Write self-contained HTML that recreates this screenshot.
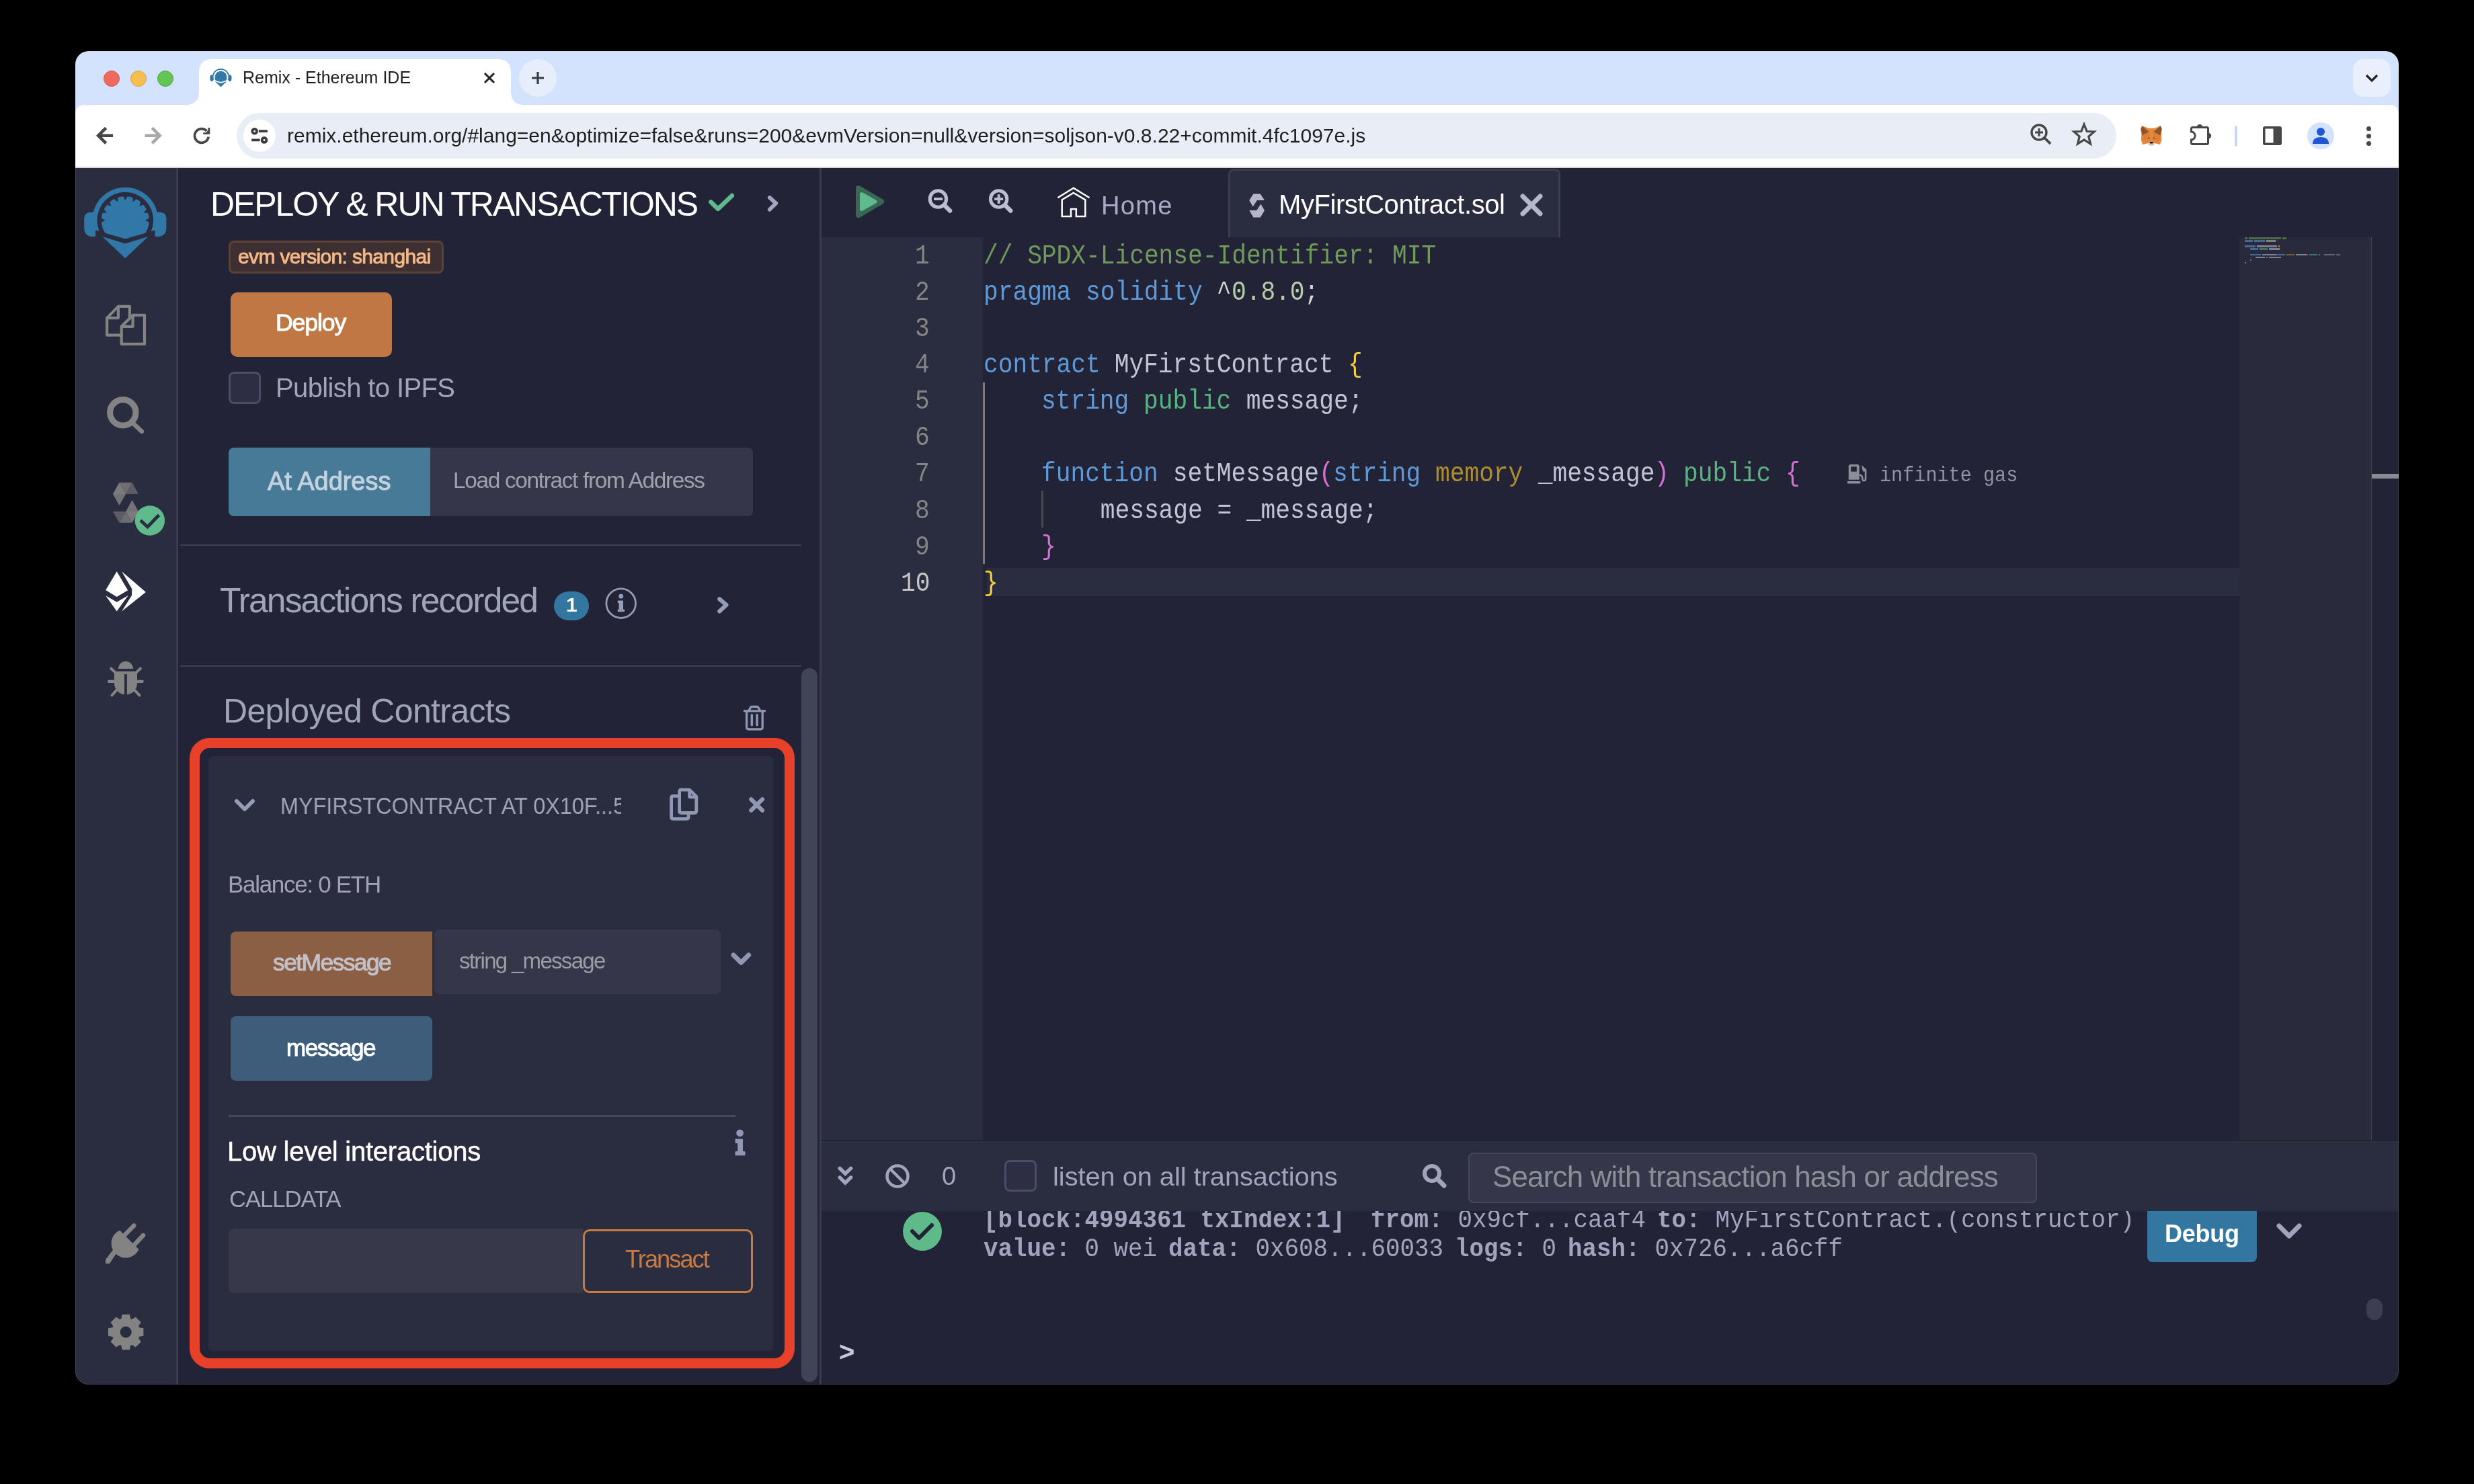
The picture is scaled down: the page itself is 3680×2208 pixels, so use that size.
<!DOCTYPE html>
<html><head><meta charset="utf-8"><title>Remix - Ethereum IDE</title>
<style>
html,body{margin:0;padding:0}
body{width:3680px;height:2208px;background:#000;position:relative;overflow:hidden;font-family:'Liberation Sans', sans-serif}
.a{position:absolute;box-sizing:content-box}
.t{white-space:nowrap;will-change:transform}
#win{position:absolute;left:112px;top:76px;width:3456px;height:1984px;border-radius:20px;overflow:hidden;background:#222336}
#pg{position:absolute;left:-112px;top:-76px;width:3680px;height:2208px}
</style></head>
<body><div id="win"><div id="pg">
<div class="a" style="left:112px;top:76px;width:3456px;height:99px;background:#d3e3fd;"></div>
<div class="a" style="left:154px;top:105px;width:22px;height:22px;border-radius:50%;background:#ee6a5f;border:1px solid #d9534a"></div>
<div class="a" style="left:194px;top:105px;width:22px;height:22px;border-radius:50%;background:#f5bf4f;border:1px solid #d6a243"></div>
<div class="a" style="left:234px;top:105px;width:22px;height:22px;border-radius:50%;background:#62c554;border:1px solid #50a73f"></div>
<svg class="a" style="left:270px;top:80px;" width="520" height="80" viewBox="0 0 520 80"><path d="M6,76 Q26,76 26,56 L26,28 Q26,8 46,8 L470,8 Q490,8 490,28 L490,56 Q490,76 510,76 Z" fill="#fff"/></svg>
<div class="a" style="left:772px;top:88px;width:56px;height:56px;border-radius:50%;background:#e6edfb"></div>
<svg class="a" style="left:786px;top:102px;" width="28" height="28" viewBox="0 0 28 28"><path d="M14,5 V23 M5,14 H23" stroke="#3c3c3c" stroke-width="3.2" stroke-linecap="butt"/></svg>
<svg class="a" style="left:716px;top:104px;" width="24" height="24" viewBox="0 0 24 24"><path d="M5,5 L19,19 M19,5 L5,19" stroke="#222" stroke-width="3"/></svg>
<div class="a" style="left:3500px;top:88px;width:56px;height:56px;border-radius:16px;background:#e9effc"></div>
<svg class="a" style="left:3514px;top:102px;" width="28" height="28" viewBox="0 0 28 28"><path d="M6,10 L14,18 L22,10" fill="none" stroke="#222" stroke-width="3.2"/></svg>
<div class="a t" style="left:361px;top:103.33px;font-size:25px;line-height:25px;color:#1f1f1f;font-weight:normal;letter-spacing:0px;font-family:'Liberation Sans', sans-serif;">Remix - Ethereum IDE</div>
<div class="a" style="left:112px;top:156px;width:3456px;height:92px;background:#ffffff;border-radius:13px 13px 0 0"></div>
<div class="a" style="left:112px;top:248px;width:3456px;height:2px;background:#d5d9de;"></div>
<svg class="a" style="left:120px;top:170px;" width="320" height="65" viewBox="0 0 320 65"><g fill="none" stroke-width="4.6" stroke-linecap="butt"><path d="M48.1,31.7 H26 M37.6,20.3 L26.2,31.7 L37.6,43.1" stroke="#474747"/><path d="M95.7,31.7 H117.8 M106.2,20.3 L117.6,31.7 L106.2,43.1" stroke="#a8a8a8"/><path d="M187.35,24.81 A10.35,10.35 0 1 0 190.15,33.44" stroke="#474747" stroke-width="3.7"/></g><path d="M192.3,20 L192.3,29.8 L182.1,29.8 L182.1,27.2 L186.5,27.2 L189.5,23.5 L189.5,20 Z" fill="#474747"/></svg>
<div class="a" style="left:352px;top:168px;width:2796px;height:68px;border-radius:34px;background:#e9eef6"></div>
<div class="a" style="left:362px;top:178px;width:48px;height:48px;border-radius:50%;background:#ffffff"></div>
<svg class="a" style="left:120px;top:170px;" width="320" height="65" viewBox="0 0 320 65"><g fill="none" stroke="#3c3c3c" stroke-width="3.8"><circle cx="258.7" cy="25.2" r="3.4"/><path d="M264.8,25.2 H277.9"/><circle cx="273" cy="38.4" r="3.4"/><path d="M254.2,38.4 H266.6"/></g></svg>
<div class="a t" style="left:427px;top:187.00px;font-size:30px;line-height:30px;color:#1f1f1f;font-weight:normal;letter-spacing:0px;font-family:'Liberation Sans', sans-serif;">remix.ethereum.org/#lang=en&amp;optimize=false&amp;runs=200&amp;evmVersion=null&amp;version=soljson-v0.8.22+commit.4fc1097e.js</div>
<svg class="a" style="left:3016px;top:180px;" width="40" height="40" viewBox="0 0 40 40"><circle cx="17" cy="17" r="11" fill="none" stroke="#474747" stroke-width="3.4"/><path d="M25,25 L34,34" stroke="#474747" stroke-width="3.8"/><path d="M17,11 V23 M11,17 H23" stroke="#474747" stroke-width="3"/></svg>
<svg class="a" style="left:3080px;top:180px;" width="40" height="40" viewBox="0 0 40 40"><path d="M20,5 L24.2,15.5 L35,16 L26.8,23 L29.5,34 L20,28 L10.5,34 L13.2,23 L5,16 L15.8,15.5 Z" fill="none" stroke="#474747" stroke-width="3.2" stroke-linejoin="miter"/></svg>
<svg class="a" style="left:3176px;top:178px;" width="48" height="46" viewBox="0 0 48 46"><path d="M10.2,9.3 L19.8,12.7 L28.8,12.7 L37.7,9.3 L39.7,13.9 L38.8,21 L39.4,30.4 L36.9,37 L28.5,35 L24.2,38.4 L19.8,35 L11.2,37 L8.7,30.4 L9.4,21 L8.2,13.9 Z" fill="#e6883a"/><path d="M10.2,9.3 L8.4,14 L10.5,23.5 L20.8,18.3 Z M37.7,9.3 L39.6,14 L37.6,23.5 L27.3,18.3 Z" fill="#8f552e"/><path d="M11,24 L20,19 L22,30 L12,32 Z M37,24 L28,19 L26,30 L36,32 Z" fill="#d97a33" opacity=".6"/><path d="M18.9,35 L29.1,35 L27,38.4 L21,38.4 Z" fill="#cdbfb0"/><path d="M21.7,33 L26.7,33 L25.8,35.4 L22.6,35.4 Z" fill="#111"/><circle cx="20.3" cy="27.5" r=".9" fill="#33406a"/><circle cx="27.9" cy="27.5" r=".9" fill="#33406a"/></svg>
<svg class="a" style="left:3176px;top:178px;" width="124" height="46" viewBox="0 0 124 46"><path d="M83.5,13.5 Q83.5,11.5 85.5,11.5 H106.5 Q108.5,11.5 108.5,13.5 V34.6 Q108.5,36.6 106.5,36.6 H85.5 Q83.5,36.6 83.5,34.6 V30 A5.6,6 0 0 0 83.5,18 Z" fill="none" stroke="#474747" stroke-width="3"/><path d="M91.6,11.5 A4.4,4.6 0 0 1 100.4,11.5 Z M108.5,19.6 A4.8,4.4 0 0 1 108.5,28.4 Z" fill="#474747"/></svg>
<div class="a" style="left:3324px;top:187px;width:4px;height:31px;background:#c7d7f7;border-radius:2px"></div>
<svg class="a" style="left:3362px;top:184px;" width="36" height="36" viewBox="0 0 36 36"><rect x="4" y="4" width="28" height="28" rx="3" fill="#474747"/><rect x="7.5" y="7.5" width="12" height="21" fill="#fff"/></svg>
<div class="a" style="left:3432px;top:182px;width:40px;height:40px;border-radius:50%;background:#d3e3fd"></div>
<svg class="a" style="left:3432px;top:182px;" width="40" height="40" viewBox="0 0 40 40"><circle cx="20" cy="14" r="6" fill="#1f56d1"/><path d="M8,32 Q8,22 20,22 Q32,22 32,32 Z" fill="#1f56d1"/></svg>
<div class="a" style="left:3520px;top:187.5px;width:7px;height:7px;border-radius:50%;background:#474747"></div>
<div class="a" style="left:3520px;top:198.5px;width:7px;height:7px;border-radius:50%;background:#474747"></div>
<div class="a" style="left:3520px;top:209.5px;width:7px;height:7px;border-radius:50%;background:#474747"></div>
<div class="a" style="left:112px;top:250px;width:150px;height:1810px;background:#2a2c3f;"></div>
<div class="a" style="left:262px;top:250px;width:3px;height:1810px;background:#3a3c52;"></div>
<div class="a" style="left:265px;top:250px;width:954px;height:1810px;background:#222336;"></div>
<div class="a" style="left:1219px;top:250px;width:3px;height:1810px;background:#3a3c52;"></div>
<div class="a" style="left:1222px;top:250px;width:2346px;height:103px;background:#222336;"></div>
<div class="a" style="left:1222px;top:353px;width:240px;height:1344px;background:#2a2c3f;"></div>
<div class="a" style="left:1462px;top:353px;width:1869px;height:1344px;background:#222336;"></div>
<div class="a" style="left:3331px;top:353px;width:196px;height:1344px;background:#292b3d;"></div>
<div class="a" style="left:3527px;top:353px;width:1px;height:1344px;background:#3f4155;"></div>
<div class="a" style="left:3528px;top:353px;width:40px;height:1344px;background:#222336;"></div>
<div class="a" style="left:3528px;top:705px;width:40px;height:7px;background:#8a8d93;"></div>
<div class="a" style="left:1222px;top:1696px;width:2346px;height:2px;background:#1f2030;"></div>
<div class="a" style="left:1222px;top:1698px;width:2346px;height:3px;background:#2b3242;"></div>
<div class="a" style="left:1222px;top:1700px;width:2346px;height:102px;background:#2a2c3f;"></div>
<div class="a" style="left:1222px;top:1802px;width:2346px;height:258px;background:#222336;"></div>
<div class="a t" style="left:312.5px;top:278.67px;font-size:50px;line-height:50px;color:#ffffff;font-weight:normal;letter-spacing:-2.08px;font-family:'Liberation Sans', sans-serif;">DEPLOY &amp; RUN TRANSACTIONS</div>
<svg class="a" style="left:1050px;top:284px;" width="46" height="36" viewBox="0 0 46 36"><path d="M7.5,16.6 L18,26.8 L38.8,7.1" fill="none" stroke="#5fba8d" stroke-width="6.6" stroke-linecap="round" stroke-linejoin="round"/></svg>
<svg class="a" style="left:1136px;top:288px;" width="26" height="30" viewBox="0 0 26 30"><path d="M8.8,6 L18.3,14.4 L8.8,23.8" fill="none" stroke="#a3a4bf" stroke-width="5.8" stroke-linecap="round" stroke-linejoin="round"/></svg>
<div class="a" style="left:340px;top:358px;width:314px;height:43px;border:3px solid #5c4236;border-radius:8px;background:#3e2f33"></div>
<div class="a t" style="left:354px;top:366.60px;font-size:30px;line-height:30px;color:#f5b987;font-weight:normal;letter-spacing:-0.65px;font-family:'Liberation Sans', sans-serif;-webkit-text-stroke:0.9px #f5b987">evm version: shanghai</div>
<div class="a" style="left:343px;top:435px;width:240px;height:96px;border-radius:10px;background:#bf7843"></div>
<div class="a t" style="left:409.5px;top:463.37px;font-size:35.7px;line-height:35.7px;color:#ffffff;font-weight:normal;letter-spacing:-1.15px;font-family:'Liberation Sans', sans-serif;-webkit-text-stroke:1px #ffffff">Deploy</div>
<div class="a" style="left:340px;top:553px;width:42px;height:42px;border:3px solid #4b4d66;border-radius:8px;background:#2d2e43"></div>
<div class="a t" style="left:410px;top:557.13px;font-size:40px;line-height:40px;color:#a2a3bd;font-weight:normal;letter-spacing:-0.62px;font-family:'Liberation Sans', sans-serif;">Publish to IPFS</div>
<div class="a" style="left:340px;top:666px;width:300px;height:102px;border-radius:8px 0 0 8px;background:#467a97"></div>
<div class="a" style="left:640px;top:666px;width:480px;height:102px;border-radius:0 8px 8px 0;background:#35364a"></div>
<div class="a t" style="left:398.3px;top:696.53px;font-size:38px;line-height:38px;color:#c4d2de;font-weight:normal;letter-spacing:-0.04px;font-family:'Liberation Sans', sans-serif;-webkit-text-stroke:1px #c4d2de">At Address</div>
<div class="a t" style="left:674.4px;top:698.12px;font-size:33.4px;line-height:33.4px;color:#9fa2ad;font-weight:normal;letter-spacing:-1.33px;font-family:'Liberation Sans', sans-serif;">Load contract from Address</div>
<div class="a" style="left:268px;top:810px;width:924px;height:2px;background:#3d3f54;"></div>
<div class="a t" style="left:327px;top:868.31px;font-size:51.6px;line-height:51.6px;color:#a0a4b8;font-weight:normal;letter-spacing:-1.87px;font-family:'Liberation Sans', sans-serif;">Transactions recorded</div>
<div class="a" style="left:824px;top:880px;width:52px;height:43px;border-radius:22px;background:#3377a0"></div>
<div class="a t" style="left:841.5px;top:884.80px;font-size:30px;line-height:30px;color:#ffffff;font-weight:bold;letter-spacing:0px;font-family:'Liberation Sans', sans-serif;">1</div>
<svg class="a" style="left:890px;top:860px;" width="70" height="70" viewBox="0 0 70 70"><circle cx="33.7" cy="37.7" r="21.8" fill="none" stroke="#959cb6" stroke-width="2.8"/><circle cx="33.7" cy="27.2" r="3.4" fill="#959cb6"/><path d="M28.8,33.4 H37 V46.8 H39 V50.2 H28.8 V46.8 H30.6 V37 H28.8 Z" fill="#959cb6"/></svg>
<svg class="a" style="left:1062px;top:886px;" width="26" height="30" viewBox="0 0 26 30"><path d="M8.3,5.3 L18.5,14 L8.3,23.5" fill="none" stroke="#959cb6" stroke-width="6.2" stroke-linecap="round" stroke-linejoin="round"/></svg>
<div class="a" style="left:268px;top:990px;width:924px;height:2px;background:#3d3f54;"></div>
<div class="a t" style="left:332px;top:1032.66px;font-size:50px;line-height:50px;color:#a0a4b8;font-weight:normal;letter-spacing:-0.65px;font-family:'Liberation Sans', sans-serif;">Deployed Contracts</div>
<svg class="a" style="left:1070px;top:1030px;" width="80" height="70" viewBox="0 0 80 70"><g fill="none" stroke="#9097b3" stroke-width="3.3" stroke-linecap="round" stroke-linejoin="round"><path d="M37.2,27.8 H67.7"/><path d="M44.3,26.4 L46.8,22 Q47.3,21.5 48.5,21.5 H56 Q57,21.5 57.6,22.3 L60.1,26.4"/><path d="M40.6,28 V52 Q40.6,55 43.6,55 H61.2 Q64.2,55 64.2,52 V28"/><path d="M48.3,33.7 V48.8 M56.1,33.7 V48.8" stroke-width="3.5"/></g></svg>
<div class="a" style="left:1192px;top:994px;width:24px;height:1062px;border-radius:12px;background:#414357"></div>
<div class="a" style="left:282px;top:1098px;width:870px;height:908px;border:15px solid #e8412a;border-radius:30px"></div>
<div class="a" style="left:310px;top:1125px;width:840px;height:885px;border-radius:6px;background:#2a2c3f"></div>
<svg class="a" style="left:346px;top:1184px;" width="36" height="28" viewBox="0 0 36 28"><path d="M6,8 L18,20 L30,8" fill="none" stroke="#959cb6" stroke-width="6" stroke-linecap="round" stroke-linejoin="round"/></svg>
<div class="a" style="left:418px;top:1170px;width:506px;height:60px;overflow:hidden">
<div class="a t" style="left:-1.5px;top:11.59px;font-size:35.8px;line-height:35.8px;color:#a0a4b8;font-weight:normal;letter-spacing:0px;font-family:'Liberation Sans', sans-serif;transform:scaleX(0.905);transform-origin:0 0">MYFIRSTCONTRACT AT 0X10F...5E4</div>
</div>
<svg class="a" style="left:980px;top:1160px;" width="170" height="70" viewBox="0 0 170 70"><g fill="none" stroke="#9097b3" stroke-width="4.8" stroke-linejoin="round"><path d="M30.6,18 Q30.6,15.1 33.5,15.1 H45.7 L55.8,25.2 V46.6 Q55.8,49.5 52.9,49.5 H33.5 Q30.6,49.5 30.6,46.6 Z"/><path d="M45.7,15.1 V25.8 H55.8"/><path d="M30.6,24.4 H21.5 Q18.6,24.4 18.6,27.3 V55.5 Q18.6,58.4 21.5,58.4 H41.1 Q44,58.4 44,55.5 V49.5"/></g></svg>
<svg class="a" style="left:980px;top:1160px;" width="170" height="70" viewBox="0 0 170 70"><path d="M137.3,29.2 L154,45.7 M154,29.2 L137.3,45.7" stroke="#9097b3" stroke-width="6.2" stroke-linecap="round"/></svg>
<div class="a t" style="left:339px;top:1298.37px;font-size:35px;line-height:35px;color:#a0a2b4;font-weight:normal;letter-spacing:-1.3px;font-family:'Liberation Sans', sans-serif;">Balance: 0 ETH</div>
<div class="a" style="left:343px;top:1386px;width:300px;height:96px;border-radius:8px 0 0 8px;background:#8b5f44"></div>
<div class="a t" style="left:406.3px;top:1414.94px;font-size:35.5px;line-height:35.5px;color:#c4c0c8;font-weight:normal;letter-spacing:-1.62px;font-family:'Liberation Sans', sans-serif;-webkit-text-stroke:1px #c4c0c8">setMessage</div>
<div class="a" style="left:646px;top:1383px;width:426px;height:96px;border-radius:8px;background:#35364a"></div>
<div class="a t" style="left:683px;top:1413.06px;font-size:33px;line-height:33px;color:#9a9ca6;font-weight:normal;letter-spacing:-1.7px;font-family:'Liberation Sans', sans-serif;">string _message</div>
<svg class="a" style="left:1084px;top:1412px;" width="36" height="30" viewBox="0 0 36 30"><path d="M7,9 L18.3,20.2 L29.6,9" fill="none" stroke="#9097b3" stroke-width="7" stroke-linecap="round" stroke-linejoin="round"/></svg>
<div class="a" style="left:343px;top:1512px;width:300px;height:96px;border-radius:8px;background:#3d5d7a"></div>
<div class="a t" style="left:425.5px;top:1541.37px;font-size:35px;line-height:35px;color:#ffffff;font-weight:normal;letter-spacing:-1.42px;font-family:'Liberation Sans', sans-serif;-webkit-text-stroke:1px #ffffff">message</div>
<div class="a" style="left:340px;top:1659px;width:754px;height:3px;background:#45475a;"></div>
<div class="a t" style="left:338px;top:1693.13px;font-size:40px;line-height:40px;color:#ffffff;font-weight:normal;letter-spacing:-0.25px;font-family:'Liberation Sans', sans-serif;-webkit-text-stroke:0.5px #ffffff">Low level interactions</div>
<svg class="a" style="left:1090px;top:1678px;" width="22" height="44" viewBox="0 0 22 44"><circle cx="10.6" cy="7.8" r="5.4" fill="#9097b3"/><path d="M4,17 H14.5 V35.5 H18 V40.8 H4 V35.5 H7.8 V22.5 H4 Z" fill="#9097b3" stroke="#9097b3" stroke-width="1" stroke-linejoin="round"/></svg>
<div class="a t" style="left:341px;top:1767.20px;font-size:34.6px;line-height:34.6px;color:#9fa3b4;font-weight:normal;letter-spacing:-1.0px;font-family:'Liberation Sans', sans-serif;">CALLDATA</div>
<div class="a" style="left:340px;top:1828px;width:527px;height:96px;border-radius:8px 0 0 8px;background:#373849"></div>
<div class="a" style="left:867px;top:1829px;width:247px;height:89px;border:3px solid #c97a3f;border-radius:10px"></div>
<div class="a t" style="left:930px;top:1856.06px;font-size:36.3px;line-height:36.3px;color:#c97a3f;font-weight:normal;letter-spacing:-2.0px;font-family:'Liberation Sans', sans-serif;">Transact</div>
<svg class="a" style="left:112px;top:260px;" width="150" height="150" viewBox="0 0 150 150"><defs><clipPath id="hb2a2c3f"><rect x="0" y="0" width="150" height="58"/></clipPath></defs><g fill="#3178a8"><circle cx="74.3" cy="67.7" r="49" clip-path="url(#hb2a2c3f)"/><path d="M26.8,55.6 Q14,55 13.2,64 V80 Q14,92 26,92 L40,92 L40,55.6 Z"/><path d="M121.8,55.6 Q134.6,55 135.4,64 V80 Q134.6,92 122.6,92 L108.6,92 L108.6,55.6 Z"/></g><circle cx="74.3" cy="67.7" r="41.9" fill="#2a2c3f"/><circle cx="74.3" cy="67.7" r="35.6" fill="#3178a8"/><path d="M36.3,63.5 L36.3,71.9 L44.8,67.7 Z" fill="#2a2c3f"/><path d="M40.8,49.3 L37.6,57.0 L47.0,56.4 Z" fill="#2a2c3f"/><path d="M50.4,37.9 L44.5,43.8 L53.4,46.8 Z" fill="#2a2c3f"/><path d="M63.6,31.0 L55.9,34.2 L63.0,40.4 Z" fill="#2a2c3f"/><path d="M78.5,29.7 L70.1,29.7 L74.3,38.2 Z" fill="#2a2c3f"/><path d="M92.7,34.2 L85.0,31.0 L85.6,40.4 Z" fill="#2a2c3f"/><path d="M104.1,43.8 L98.2,37.9 L95.2,46.8 Z" fill="#2a2c3f"/><path d="M111.0,57.0 L107.8,49.3 L101.6,56.4 Z" fill="#2a2c3f"/><path d="M112.3,71.9 L112.3,63.5 L103.8,67.7 Z" fill="#2a2c3f"/><path d="M30,82.6 L74.3,95.5 L118.6,82.6 L118.6,120 L30,120 Z" fill="#2a2c3f"/><path d="M40.2,92 L74.3,102.6 L108.4,92 L74.3,124.3 Z" fill="#3178a8"/></svg>
<svg class="a" style="left:308.5px;top:97px" width="40" height="40" viewBox="0 0 152.7 152.7"><defs><clipPath id="hbffffff"><rect x="0" y="0" width="150" height="58"/></clipPath></defs><g fill="#3178a8"><circle cx="74.3" cy="67.7" r="49" clip-path="url(#hbffffff)"/><path d="M26.8,55.6 Q14,55 13.2,64 V80 Q14,92 26,92 L40,92 L40,55.6 Z"/><path d="M121.8,55.6 Q134.6,55 135.4,64 V80 Q134.6,92 122.6,92 L108.6,92 L108.6,55.6 Z"/></g><circle cx="74.3" cy="67.7" r="41.9" fill="#ffffff"/><circle cx="74.3" cy="67.7" r="35.6" fill="#3178a8"/><path d="M36.3,63.5 L36.3,71.9 L44.8,67.7 Z" fill="#ffffff"/><path d="M40.8,49.3 L37.6,57.0 L47.0,56.4 Z" fill="#ffffff"/><path d="M50.4,37.9 L44.5,43.8 L53.4,46.8 Z" fill="#ffffff"/><path d="M63.6,31.0 L55.9,34.2 L63.0,40.4 Z" fill="#ffffff"/><path d="M78.5,29.7 L70.1,29.7 L74.3,38.2 Z" fill="#ffffff"/><path d="M92.7,34.2 L85.0,31.0 L85.6,40.4 Z" fill="#ffffff"/><path d="M104.1,43.8 L98.2,37.9 L95.2,46.8 Z" fill="#ffffff"/><path d="M111.0,57.0 L107.8,49.3 L101.6,56.4 Z" fill="#ffffff"/><path d="M112.3,71.9 L112.3,63.5 L103.8,67.7 Z" fill="#ffffff"/><path d="M30,82.6 L74.3,95.5 L118.6,82.6 L118.6,120 L30,120 Z" fill="#ffffff"/><path d="M40.2,92 L74.3,102.6 L108.4,92 L74.3,124.3 Z" fill="#3178a8"/></svg>
<svg class="a" style="left:137px;top:430px;" width="100" height="100" viewBox="0 0 100 100"><g fill="none" stroke="#838383" stroke-width="4.2" stroke-linejoin="round" stroke-linecap="round"><path d="M55.9,41 V25.9 H38.9 L22.1,43.1 V68.7 H43.7"/><path d="M38.9,25.9 V43.1 H22.1"/><path d="M60.6,38.9 H78 V81.9 H43.7 V55.8 Z"/><path d="M60.6,38.9 V55.8 H43.7"/></g></svg>
<svg class="a" style="left:137px;top:570px;" width="100" height="100" viewBox="0 0 100 100"><circle cx="45.8" cy="43.8" r="19.2" fill="none" stroke="#838383" stroke-width="9.1"/><path d="M60,59 L73.8,71.8" stroke="#838383" stroke-width="6.6" stroke-linecap="round"/></svg>
<svg class="a" style="left:137px;top:700px;" width="120" height="100" viewBox="0 0 120 100"><path d="M40.4,18.1 L30.9,34.9 L50.2,34.9 Z" fill="#7b7b7d"/><path d="M40.4,18.1 L59.6,18.1 L50.2,34.9 Z" fill="#6f6f73"/><path d="M59.6,18.1 L68.9,34.9 L50.2,34.9 Z" fill="#5d5d67"/><path d="M30.9,34.9 L50.2,34.9 L40.4,51.9 Z" fill="#727276"/><path d="M59.6,44.1 L50.2,61 L69,61 Z" fill="#747478"/><path d="M50.2,61 L69,61 L59.6,77.8 Z" fill="#7b7b7d"/><path d="M50.2,61 L59.6,77.8 L40.4,77.8 Z" fill="#6c6c71"/><path d="M30.9,61 L50.2,61 L40.4,77.8 Z" fill="#5d5d67"/><circle cx="85.9" cy="74.5" r="22.2" fill="#5fba8c"/><path d="M73.8,75.8 L82.5,83.9 L97.8,68" fill="none" stroke="#2a2c3f" stroke-width="4.8" stroke-linecap="square"/></svg>
<svg class="a" style="left:137px;top:830px;" width="100" height="100" viewBox="0 0 100 100"><g fill="#ffffff"><path d="M36.7,20.2 L53.2,48.2 L36.7,58 L20.2,48 Z"/><path d="M20.2,56.3 L36.7,65.7 L53.6,55.9 L36.7,79.5 Z"/><path d="M44.1,20.2 L79.9,50.9 L44.1,79.5 L59,55.9 L59.3,46.2 Z"/></g></svg>
<svg class="a" style="left:137px;top:960px;" width="100" height="100" viewBox="0 0 100 100"><g fill="#838383"><path d="M39,34.9 A11,11 0 0 1 61,34.9 Z"/><path d="M33,39 H67 V57 A17,16.5 0 0 1 50,73.5 A17,16.5 0 0 1 33,57 Z"/></g><rect x="48" y="43.1" width="3.9" height="32" fill="#2a2c3f"/><g stroke="#838383" stroke-width="4.1" stroke-linecap="round"><path d="M28.3,34.7 L34.4,40.4 M71.8,34.7 L65.7,40.4 M24.9,53.9 H33 M74.8,53.9 H67 M29.6,74.5 L35.7,67.4 M70.4,74.5 L64,67.7"/></g></svg>
<svg class="a" style="left:137px;top:1800px;" width="100" height="100" viewBox="0 0 100 100"><g fill="#838383"><path d="M40.97,30.47 L69.53,59.03 A21.5,21.5 0 1 1 40.97,30.47 Z"/><path d="M33,57 L38,62 L26,80 L20,80 L20,74 Z"/></g><g stroke="#838383" stroke-width="6.6" stroke-linecap="round"><path d="M47,39 L62.3,23.5 M62,53 L76,38"/></g></svg>
<svg class="a" style="left:137px;top:1955px;" width="100" height="60" viewBox="0 0 100 60"><g fill="#838383"><circle cx="50.2" cy="27" r="21"/><path d="M44.5,0.8 H55.9 L57.5,9 H42.9 Z" transform="rotate(0 50.2 27)"/><path d="M44.5,0.8 H55.9 L57.5,9 H42.9 Z" transform="rotate(45 50.2 27)"/><path d="M44.5,0.8 H55.9 L57.5,9 H42.9 Z" transform="rotate(90 50.2 27)"/><path d="M44.5,0.8 H55.9 L57.5,9 H42.9 Z" transform="rotate(135 50.2 27)"/><path d="M44.5,0.8 H55.9 L57.5,9 H42.9 Z" transform="rotate(180 50.2 27)"/><path d="M44.5,0.8 H55.9 L57.5,9 H42.9 Z" transform="rotate(225 50.2 27)"/><path d="M44.5,0.8 H55.9 L57.5,9 H42.9 Z" transform="rotate(270 50.2 27)"/><path d="M44.5,0.8 H55.9 L57.5,9 H42.9 Z" transform="rotate(315 50.2 27)"/></g><circle cx="50.2" cy="27" r="8.5" fill="#2a2c3f"/></svg>
<svg class="a" style="left:1250px;top:260px;" width="280" height="80" viewBox="0 0 280 80"><path d="M27,20 L61,40 L27,60 Z" fill="#3a6656" stroke="#3a6656" stroke-width="8" stroke-linejoin="round"/><path d="M31.5,28.5 L52,40 L31.5,51.5 Z" fill="#5fbb8d" stroke="#5fbb8d" stroke-width="5" stroke-linejoin="round"/><g fill="none" stroke="#bcbdd0"><circle cx="145.4" cy="36" r="12.2" stroke-width="5.1"/><path d="M156.5,47 L163,53.5" stroke-width="6.6" stroke-linecap="round"/><path d="M139,36 H152.2" stroke-width="4"/><circle cx="235.6" cy="36" r="12.2" stroke-width="5.1"/><path d="M246.7,47 L253.2,53.5" stroke-width="6.6" stroke-linecap="round"/><path d="M229.2,36 H242.2 M235.7,29.2 V43" stroke-width="4"/></g></svg>
<svg class="a" style="left:1560px;top:265px;" width="340" height="75" viewBox="0 0 340 75"><g fill="none" stroke="#ffffff" stroke-width="2.5"><path d="M13.3,29.3 L36.8,14.8 L60.5,29.3"/><path d="M19.7,32.3 L36.8,22 L54.3,32.3 V57 H40.8 V46 H33 V57 H19.7 Z"/></g></svg>
<div class="a t" style="left:1638px;top:286.83px;font-size:38px;line-height:38px;color:#a9aac4;font-weight:normal;letter-spacing:1.33px;font-family:'Liberation Sans', sans-serif;">Home</div>
<div class="a" style="left:1827px;top:251px;width:488px;height:99px;border:3px solid #3a3c50;border-bottom:none;border-radius:8px 8px 0 0;background:#2a2c3f"></div>
<svg class="a" style="left:1560px;top:265px;" width="340" height="75" viewBox="0 0 340 75"><g fill="#b5b6cc"><path d="M298.2,33 L304.4,23.4 L314.7,23.4 L321,33 L309.9,33 L303.7,42.6 Z"/><path d="M321,48.1 L314.7,58.4 L304.4,58.4 L298.2,48.1 L309.3,48.1 L315.3,38.6 Z"/></g></svg>
<div class="a t" style="left:1902px;top:284.13px;font-size:40px;line-height:40px;color:#ffffff;font-weight:normal;letter-spacing:-0.42px;font-family:'Liberation Sans', sans-serif;">MyFirstContract.sol</div>
<svg class="a" style="left:2258px;top:285px;" width="40" height="40" viewBox="0 0 40 40"><path d="M7,7 L33,33 M33,7 L7,33" stroke="#b5b6cc" stroke-width="7" stroke-linecap="round"/></svg>
<div class="a" style="left:1468px;top:845px;width:1863px;height:42px;background:#2a2c3f;"></div>
<div class="a" style="left:1462px;top:569px;width:3px;height:270px;background:#7a7a7a;"></div>
<div class="a" style="left:1549px;top:730px;width:3px;height:55px;background:#4a4a48;"></div>
<div class="a t" style="left:1361.3px;top:364.87px;font-size:36.2px;line-height:36.2px;color:#858585;font-weight:normal;letter-spacing:0px;font-family:'Liberation Mono', monospace;;transform:scaleY(1.1);transform-origin:0 27.73px">1</div>
<div class="a t" style="left:1462.6px;top:364.87px;font-size:36.2px;line-height:36.2px;color:#6f9a5a;font-weight:normal;letter-spacing:0px;font-family:'Liberation Mono', monospace;white-space:pre;transform:scaleY(1.1);transform-origin:0 27.73px">// SPDX-License-Identifier: MIT</div>
<div class="a t" style="left:1361.3px;top:418.97px;font-size:36.2px;line-height:36.2px;color:#858585;font-weight:normal;letter-spacing:0px;font-family:'Liberation Mono', monospace;;transform:scaleY(1.1);transform-origin:0 27.73px">2</div>
<div class="a t" style="left:1462.6px;top:418.97px;font-size:36.2px;line-height:36.2px;color:#5f9ad8;font-weight:normal;letter-spacing:0px;font-family:'Liberation Mono', monospace;white-space:pre;transform:scaleY(1.1);transform-origin:0 27.73px">pragma</div>
<div class="a t" style="left:1592.8px;top:418.97px;font-size:36.2px;line-height:36.2px;color:#fff;font-weight:normal;letter-spacing:0px;font-family:'Liberation Mono', monospace;white-space:pre;transform:scaleY(1.1);transform-origin:0 27.73px"> </div>
<div class="a t" style="left:1614.5px;top:418.97px;font-size:36.2px;line-height:36.2px;color:#5f9ad8;font-weight:normal;letter-spacing:0px;font-family:'Liberation Mono', monospace;white-space:pre;transform:scaleY(1.1);transform-origin:0 27.73px">solidity</div>
<div class="a t" style="left:1788.1px;top:418.97px;font-size:36.2px;line-height:36.2px;color:#d4d4d4;font-weight:normal;letter-spacing:0px;font-family:'Liberation Mono', monospace;white-space:pre;transform:scaleY(1.1);transform-origin:0 27.73px"> ^</div>
<div class="a t" style="left:1831.5px;top:418.97px;font-size:36.2px;line-height:36.2px;color:#b5cea8;font-weight:normal;letter-spacing:0px;font-family:'Liberation Mono', monospace;white-space:pre;transform:scaleY(1.1);transform-origin:0 27.73px">0.8.0</div>
<div class="a t" style="left:1940.0px;top:418.97px;font-size:36.2px;line-height:36.2px;color:#d4d4d4;font-weight:normal;letter-spacing:0px;font-family:'Liberation Mono', monospace;white-space:pre;transform:scaleY(1.1);transform-origin:0 27.73px">;</div>
<div class="a t" style="left:1361.3px;top:473.07px;font-size:36.2px;line-height:36.2px;color:#858585;font-weight:normal;letter-spacing:0px;font-family:'Liberation Mono', monospace;;transform:scaleY(1.1);transform-origin:0 27.73px">3</div>
<div class="a t" style="left:1361.3px;top:527.17px;font-size:36.2px;line-height:36.2px;color:#858585;font-weight:normal;letter-spacing:0px;font-family:'Liberation Mono', monospace;;transform:scaleY(1.1);transform-origin:0 27.73px">4</div>
<div class="a t" style="left:1462.6px;top:527.17px;font-size:36.2px;line-height:36.2px;color:#5f9ad8;font-weight:normal;letter-spacing:0px;font-family:'Liberation Mono', monospace;white-space:pre;transform:scaleY(1.1);transform-origin:0 27.73px">contract</div>
<div class="a t" style="left:1636.1999999999998px;top:527.17px;font-size:36.2px;line-height:36.2px;color:#c2c3d3;font-weight:normal;letter-spacing:0px;font-family:'Liberation Mono', monospace;white-space:pre;transform:scaleY(1.1);transform-origin:0 27.73px"> MyFirstContract </div>
<div class="a t" style="left:2005.1px;top:527.17px;font-size:36.2px;line-height:36.2px;color:#f2cf3b;font-weight:normal;letter-spacing:0px;font-family:'Liberation Mono', monospace;white-space:pre;transform:scaleY(1.1);transform-origin:0 27.73px">{</div>
<div class="a t" style="left:1361.3px;top:581.27px;font-size:36.2px;line-height:36.2px;color:#858585;font-weight:normal;letter-spacing:0px;font-family:'Liberation Mono', monospace;;transform:scaleY(1.1);transform-origin:0 27.73px">5</div>
<div class="a t" style="left:1462.6px;top:581.27px;font-size:36.2px;line-height:36.2px;color:#fff;font-weight:normal;letter-spacing:0px;font-family:'Liberation Mono', monospace;white-space:pre;transform:scaleY(1.1);transform-origin:0 27.73px">    </div>
<div class="a t" style="left:1549.3999999999999px;top:581.27px;font-size:36.2px;line-height:36.2px;color:#5f9ad8;font-weight:normal;letter-spacing:0px;font-family:'Liberation Mono', monospace;white-space:pre;transform:scaleY(1.1);transform-origin:0 27.73px">string</div>
<div class="a t" style="left:1679.6px;top:581.27px;font-size:36.2px;line-height:36.2px;color:#fff;font-weight:normal;letter-spacing:0px;font-family:'Liberation Mono', monospace;white-space:pre;transform:scaleY(1.1);transform-origin:0 27.73px"> </div>
<div class="a t" style="left:1701.3px;top:581.27px;font-size:36.2px;line-height:36.2px;color:#57b37f;font-weight:normal;letter-spacing:0px;font-family:'Liberation Mono', monospace;white-space:pre;transform:scaleY(1.1);transform-origin:0 27.73px">public</div>
<div class="a t" style="left:1831.5px;top:581.27px;font-size:36.2px;line-height:36.2px;color:#c2c3d3;font-weight:normal;letter-spacing:0px;font-family:'Liberation Mono', monospace;white-space:pre;transform:scaleY(1.1);transform-origin:0 27.73px"> message;</div>
<div class="a t" style="left:1361.3px;top:635.37px;font-size:36.2px;line-height:36.2px;color:#858585;font-weight:normal;letter-spacing:0px;font-family:'Liberation Mono', monospace;;transform:scaleY(1.1);transform-origin:0 27.73px">6</div>
<div class="a t" style="left:1361.3px;top:689.47px;font-size:36.2px;line-height:36.2px;color:#858585;font-weight:normal;letter-spacing:0px;font-family:'Liberation Mono', monospace;;transform:scaleY(1.1);transform-origin:0 27.73px">7</div>
<div class="a t" style="left:1462.6px;top:689.47px;font-size:36.2px;line-height:36.2px;color:#fff;font-weight:normal;letter-spacing:0px;font-family:'Liberation Mono', monospace;white-space:pre;transform:scaleY(1.1);transform-origin:0 27.73px">    </div>
<div class="a t" style="left:1549.3999999999999px;top:689.47px;font-size:36.2px;line-height:36.2px;color:#5f9ad8;font-weight:normal;letter-spacing:0px;font-family:'Liberation Mono', monospace;white-space:pre;transform:scaleY(1.1);transform-origin:0 27.73px">function</div>
<div class="a t" style="left:1722.9999999999998px;top:689.47px;font-size:36.2px;line-height:36.2px;color:#c2c3d3;font-weight:normal;letter-spacing:0px;font-family:'Liberation Mono', monospace;white-space:pre;transform:scaleY(1.1);transform-origin:0 27.73px"> setMessage</div>
<div class="a t" style="left:1961.6999999999998px;top:689.47px;font-size:36.2px;line-height:36.2px;color:#d670d6;font-weight:normal;letter-spacing:0px;font-family:'Liberation Mono', monospace;white-space:pre;transform:scaleY(1.1);transform-origin:0 27.73px">(</div>
<div class="a t" style="left:1983.3999999999999px;top:689.47px;font-size:36.2px;line-height:36.2px;color:#5f9ad8;font-weight:normal;letter-spacing:0px;font-family:'Liberation Mono', monospace;white-space:pre;transform:scaleY(1.1);transform-origin:0 27.73px">string</div>
<div class="a t" style="left:2113.6px;top:689.47px;font-size:36.2px;line-height:36.2px;color:#fff;font-weight:normal;letter-spacing:0px;font-family:'Liberation Mono', monospace;white-space:pre;transform:scaleY(1.1);transform-origin:0 27.73px"> </div>
<div class="a t" style="left:2135.2999999999997px;top:689.47px;font-size:36.2px;line-height:36.2px;color:#ad8d2f;font-weight:normal;letter-spacing:0px;font-family:'Liberation Mono', monospace;white-space:pre;transform:scaleY(1.1);transform-origin:0 27.73px">memory</div>
<div class="a t" style="left:2265.4999999999995px;top:689.47px;font-size:36.2px;line-height:36.2px;color:#c2c3d3;font-weight:normal;letter-spacing:0px;font-family:'Liberation Mono', monospace;white-space:pre;transform:scaleY(1.1);transform-origin:0 27.73px"> _message</div>
<div class="a t" style="left:2460.7999999999997px;top:689.47px;font-size:36.2px;line-height:36.2px;color:#d670d6;font-weight:normal;letter-spacing:0px;font-family:'Liberation Mono', monospace;white-space:pre;transform:scaleY(1.1);transform-origin:0 27.73px">)</div>
<div class="a t" style="left:2482.4999999999995px;top:689.47px;font-size:36.2px;line-height:36.2px;color:#fff;font-weight:normal;letter-spacing:0px;font-family:'Liberation Mono', monospace;white-space:pre;transform:scaleY(1.1);transform-origin:0 27.73px"> </div>
<div class="a t" style="left:2504.1999999999994px;top:689.47px;font-size:36.2px;line-height:36.2px;color:#57b37f;font-weight:normal;letter-spacing:0px;font-family:'Liberation Mono', monospace;white-space:pre;transform:scaleY(1.1);transform-origin:0 27.73px">public</div>
<div class="a t" style="left:2634.399999999999px;top:689.47px;font-size:36.2px;line-height:36.2px;color:#fff;font-weight:normal;letter-spacing:0px;font-family:'Liberation Mono', monospace;white-space:pre;transform:scaleY(1.1);transform-origin:0 27.73px"> </div>
<div class="a t" style="left:2656.099999999999px;top:689.47px;font-size:36.2px;line-height:36.2px;color:#d670d6;font-weight:normal;letter-spacing:0px;font-family:'Liberation Mono', monospace;white-space:pre;transform:scaleY(1.1);transform-origin:0 27.73px">{</div>
<div class="a t" style="left:1361.3px;top:743.57px;font-size:36.2px;line-height:36.2px;color:#858585;font-weight:normal;letter-spacing:0px;font-family:'Liberation Mono', monospace;;transform:scaleY(1.1);transform-origin:0 27.73px">8</div>
<div class="a t" style="left:1462.6px;top:743.57px;font-size:36.2px;line-height:36.2px;color:#c2c3d3;font-weight:normal;letter-spacing:0px;font-family:'Liberation Mono', monospace;white-space:pre;transform:scaleY(1.1);transform-origin:0 27.73px">        message = _message;</div>
<div class="a t" style="left:1361.3px;top:797.67px;font-size:36.2px;line-height:36.2px;color:#858585;font-weight:normal;letter-spacing:0px;font-family:'Liberation Mono', monospace;;transform:scaleY(1.1);transform-origin:0 27.73px">9</div>
<div class="a t" style="left:1462.6px;top:797.67px;font-size:36.2px;line-height:36.2px;color:#fff;font-weight:normal;letter-spacing:0px;font-family:'Liberation Mono', monospace;white-space:pre;transform:scaleY(1.1);transform-origin:0 27.73px">    </div>
<div class="a t" style="left:1549.3999999999999px;top:797.67px;font-size:36.2px;line-height:36.2px;color:#d670d6;font-weight:normal;letter-spacing:0px;font-family:'Liberation Mono', monospace;white-space:pre;transform:scaleY(1.1);transform-origin:0 27.73px">}</div>
<div class="a t" style="left:1339.6px;top:851.77px;font-size:36.2px;line-height:36.2px;color:#c6c6c6;font-weight:normal;letter-spacing:0px;font-family:'Liberation Mono', monospace;;transform:scaleY(1.1);transform-origin:0 27.73px">10</div>
<div class="a t" style="left:1462.6px;top:851.77px;font-size:36.2px;line-height:36.2px;color:#f2cf3b;font-weight:normal;letter-spacing:0px;font-family:'Liberation Mono', monospace;white-space:pre;transform:scaleY(1.1);transform-origin:0 27.73px">}</div>
<svg class="a" style="left:2730px;top:680px;" width="70" height="50" viewBox="0 0 70 50"><g fill="#8a9099"><path d="M19.7,33.8 V14.1 Q19.7,11.1 22.7,11.1 H32.7 Q35.7,11.1 35.7,14.1 V33.8 Z"/><rect x="17.8" y="36" width="19.6" height="3.6" rx="1"/><path d="M39.3,12 L45.8,18.2 V20.5 L42.3,22.5 L40.2,19 Z"/></g><rect x="23.2" y="14.3" width="8.6" height="7.4" fill="#222336"/><path d="M35.7,26.6 Q40.2,26.6 40.2,31.8 Q40.2,35.2 42.8,35.2 Q45.1,35.2 45.1,31.8 V19" fill="none" stroke="#8a9099" stroke-width="2.6"/></svg>
<div class="a t" style="left:2796px;top:695.17px;font-size:28.5px;line-height:28.5px;color:#8f92a0;font-weight:normal;letter-spacing:0px;font-family:'Liberation Mono', monospace;;transform:scaleY(1.1);transform-origin:0 21.83px">infinite gas</div>
<div class="a" style="left:3339.0px;top:353.0px;width:4px;height:2.6px;background:#6f9a5a;opacity:.55"></div>
<div class="a" style="left:3345.0px;top:353.0px;width:48px;height:2.6px;background:#6f9a5a;opacity:.55"></div>
<div class="a" style="left:3395.0px;top:353.0px;width:6px;height:2.6px;background:#6f9a5a;opacity:.55"></div>
<div class="a" style="left:3339.0px;top:357.1px;width:12px;height:2.6px;background:#5f9ad8;opacity:.55"></div>
<div class="a" style="left:3353.0px;top:357.1px;width:16px;height:2.6px;background:#5f9ad8;opacity:.55"></div>
<div class="a" style="left:3371.0px;top:357.1px;width:2px;height:2.6px;background:#d4d4d4;opacity:.55"></div>
<div class="a" style="left:3373.0px;top:357.1px;width:10px;height:2.6px;background:#b5cea8;opacity:.55"></div>
<div class="a" style="left:3383.0px;top:357.1px;width:2px;height:2.6px;background:#d4d4d4;opacity:.55"></div>
<div class="a" style="left:3339.0px;top:365.3px;width:16px;height:2.6px;background:#5f9ad8;opacity:.55"></div>
<div class="a" style="left:3357.0px;top:365.3px;width:30px;height:2.6px;background:#c2c3d3;opacity:.55"></div>
<div class="a" style="left:3389.0px;top:365.3px;width:2px;height:2.6px;background:#f2cf3b;opacity:.55"></div>
<div class="a" style="left:3347.0px;top:369.4px;width:12px;height:2.6px;background:#5f9ad8;opacity:.55"></div>
<div class="a" style="left:3361.0px;top:369.4px;width:12px;height:2.6px;background:#57b37f;opacity:.55"></div>
<div class="a" style="left:3375.0px;top:369.4px;width:16px;height:2.6px;background:#c2c3d3;opacity:.55"></div>
<div class="a" style="left:3347.0px;top:377.6px;width:16px;height:2.6px;background:#5f9ad8;opacity:.55"></div>
<div class="a" style="left:3365.0px;top:377.6px;width:20px;height:2.6px;background:#c2c3d3;opacity:.55"></div>
<div class="a" style="left:3385.0px;top:377.6px;width:2px;height:2.6px;background:#d670d6;opacity:.55"></div>
<div class="a" style="left:3387.0px;top:377.6px;width:12px;height:2.6px;background:#5f9ad8;opacity:.55"></div>
<div class="a" style="left:3401.0px;top:377.6px;width:12px;height:2.6px;background:#ad8d2f;opacity:.55"></div>
<div class="a" style="left:3415.0px;top:377.6px;width:16px;height:2.6px;background:#c2c3d3;opacity:.55"></div>
<div class="a" style="left:3431.0px;top:377.6px;width:2px;height:2.6px;background:#d670d6;opacity:.55"></div>
<div class="a" style="left:3435.0px;top:377.6px;width:12px;height:2.6px;background:#57b37f;opacity:.55"></div>
<div class="a" style="left:3449.0px;top:377.6px;width:2px;height:2.6px;background:#d670d6;opacity:.55"></div>
<div class="a" style="left:3457.0px;top:377.6px;width:16px;height:2.6px;background:#8f92a0;opacity:.55"></div>
<div class="a" style="left:3475.0px;top:377.6px;width:6px;height:2.6px;background:#8f92a0;opacity:.55"></div>
<div class="a" style="left:3355.0px;top:381.7px;width:14px;height:2.6px;background:#c2c3d3;opacity:.55"></div>
<div class="a" style="left:3371.0px;top:381.7px;width:2px;height:2.6px;background:#c2c3d3;opacity:.55"></div>
<div class="a" style="left:3375.0px;top:381.7px;width:18px;height:2.6px;background:#c2c3d3;opacity:.55"></div>
<div class="a" style="left:3347.0px;top:385.8px;width:2px;height:2.6px;background:#d670d6;opacity:.55"></div>
<div class="a" style="left:3339.0px;top:389.9px;width:2px;height:2.6px;background:#f2cf3b;opacity:.55"></div>
<svg class="a" style="left:1240px;top:1730px;" width="34" height="38" viewBox="0 0 34 38"><path d="M9.1,8.3 L17.3,16.3 L25.7,8.3 M9.1,21.8 L17.3,29.9 L25.7,21.8" fill="none" stroke="#a2a3bd" stroke-width="5.4" stroke-linecap="round" stroke-linejoin="miter"/></svg>
<svg class="a" style="left:1314px;top:1729px;" width="42" height="42" viewBox="0 0 42 42"><circle cx="21" cy="21" r="15.5" fill="none" stroke="#a2a3bd" stroke-width="4.5"/><path d="M10,10 L32,32" stroke="#a2a3bd" stroke-width="4.5"/></svg>
<div class="a t" style="left:1401px;top:1730.83px;font-size:38px;line-height:38px;color:#a2a3bd;font-weight:normal;letter-spacing:0px;font-family:'Liberation Sans', sans-serif;">0</div>
<div class="a" style="left:1494px;top:1726px;width:42px;height:41px;border:3px solid #4b4d66;border-radius:8px;background:#2d2e43"></div>
<div class="a t" style="left:1566px;top:1730.69px;font-size:39.7px;line-height:39.7px;color:#a2a3bd;font-weight:normal;letter-spacing:0px;font-family:'Liberation Sans', sans-serif;">listen on all transactions</div>
<svg class="a" style="left:2112px;top:1728px;" width="44" height="44" viewBox="0 0 44 44"><circle cx="18" cy="18" r="11" fill="none" stroke="#a2a3bd" stroke-width="6"/><path d="M26,26 L36,36" stroke="#a2a3bd" stroke-width="7" stroke-linecap="round"/></svg>
<div class="a" style="left:2184px;top:1715px;width:842px;height:71px;border:2px solid #45475c;border-radius:8px;background:#35364a"></div>
<div class="a t" style="left:2220px;top:1728.63px;font-size:43.9px;line-height:43.9px;color:#898f96;font-weight:normal;letter-spacing:-0.8px;font-family:'Liberation Sans', sans-serif;">Search with transaction hash or address</div>
<div class="a" style="left:1343px;top:1803px;width:58px;height:58px;border-radius:50%;background:#5fba8a"></div>
<svg class="a" style="left:1343px;top:1803px;" width="58" height="58" viewBox="0 0 58 58"><path d="M14,29 L24,39 L43,20" fill="none" stroke="#222336" stroke-width="6" stroke-linecap="round" stroke-linejoin="round"/></svg>
<div class="a" style="left:1222px;top:1802px;width:2346px;height:258px;overflow:hidden">
<div class="a" style="left:-1222px;top:-1802px;width:3680px;height:2208px">
<div class="a t" style="left:1462.6px;top:1799.15px;font-size:35.83px;line-height:35.83px;color:#a2a3bd;font-weight:bold;letter-spacing:0px;font-family:'Liberation Mono', monospace;white-space:pre;transform:scaleY(1.1);transform-origin:0 27.45px">[block:4994361 txIndex:1] </div>
<div class="a t" style="left:2039.1999999999998px;top:1799.15px;font-size:35.83px;line-height:35.83px;color:#a2a3bd;font-weight:bold;letter-spacing:0px;font-family:'Liberation Mono', monospace;white-space:pre;transform:scaleY(1.1);transform-origin:0 27.45px">from:</div>
<div class="a t" style="left:2146.7px;top:1799.15px;font-size:35.83px;line-height:35.83px;color:#a2a3bd;font-weight:normal;letter-spacing:0px;font-family:'Liberation Mono', monospace;white-space:pre;transform:scaleY(1.1);transform-origin:0 27.45px"> 0x9cf...caaf4</div>
<div class="a t" style="left:2465.2999999999997px;top:1799.15px;font-size:35.83px;line-height:35.83px;color:#a2a3bd;font-weight:bold;letter-spacing:0px;font-family:'Liberation Mono', monospace;white-space:pre;transform:scaleY(1.1);transform-origin:0 27.45px">to:</div>
<div class="a t" style="left:2529.7999999999997px;top:1799.15px;font-size:35.83px;line-height:35.83px;color:#a2a3bd;font-weight:normal;letter-spacing:0px;font-family:'Liberation Mono', monospace;white-space:pre;transform:scaleY(1.1);transform-origin:0 27.45px"> MyFirstContract.(constructor)</div>
<div class="a t" style="left:1462.6px;top:1841.55px;font-size:35.83px;line-height:35.83px;color:#a2a3bd;font-weight:bold;letter-spacing:0px;font-family:'Liberation Mono', monospace;white-space:pre;transform:scaleY(1.1);transform-origin:0 27.45px">value:</div>
<div class="a t" style="left:1591.6px;top:1841.55px;font-size:35.83px;line-height:35.83px;color:#a2a3bd;font-weight:normal;letter-spacing:0px;font-family:'Liberation Mono', monospace;white-space:pre;transform:scaleY(1.1);transform-origin:0 27.45px"> 0 wei</div>
<div class="a t" style="left:1738.1999999999998px;top:1841.55px;font-size:35.83px;line-height:35.83px;color:#a2a3bd;font-weight:bold;letter-spacing:0px;font-family:'Liberation Mono', monospace;white-space:pre;transform:scaleY(1.1);transform-origin:0 27.45px">data:</div>
<div class="a t" style="left:1845.6999999999998px;top:1841.55px;font-size:35.83px;line-height:35.83px;color:#a2a3bd;font-weight:normal;letter-spacing:0px;font-family:'Liberation Mono', monospace;white-space:pre;transform:scaleY(1.1);transform-origin:0 27.45px"> 0x608...60033</div>
<div class="a t" style="left:2164.2999999999997px;top:1841.55px;font-size:35.83px;line-height:35.83px;color:#a2a3bd;font-weight:bold;letter-spacing:0px;font-family:'Liberation Mono', monospace;white-space:pre;transform:scaleY(1.1);transform-origin:0 27.45px">logs:</div>
<div class="a t" style="left:2271.7999999999997px;top:1841.55px;font-size:35.83px;line-height:35.83px;color:#a2a3bd;font-weight:normal;letter-spacing:0px;font-family:'Liberation Mono', monospace;white-space:pre;transform:scaleY(1.1);transform-origin:0 27.45px"> 0</div>
<div class="a t" style="left:2332.3999999999996px;top:1841.55px;font-size:35.83px;line-height:35.83px;color:#a2a3bd;font-weight:bold;letter-spacing:0px;font-family:'Liberation Mono', monospace;white-space:pre;transform:scaleY(1.1);transform-origin:0 27.45px">hash:</div>
<div class="a t" style="left:2439.8999999999996px;top:1841.55px;font-size:35.83px;line-height:35.83px;color:#a2a3bd;font-weight:normal;letter-spacing:0px;font-family:'Liberation Mono', monospace;white-space:pre;transform:scaleY(1.1);transform-origin:0 27.45px"> 0x726...a6cff</div>
<div class="a" style="left:3194px;top:1790px;width:163px;height:88px;border-radius:0 0 8px 8px;background:#3377a0"></div>
<div class="a t" style="left:3220px;top:1818.02px;font-size:36px;line-height:36px;color:#ffffff;font-weight:bold;letter-spacing:-0.25px;font-family:'Liberation Sans', sans-serif;">Debug</div>
</div></div>
<svg class="a" style="left:3382px;top:1814px;" width="46" height="36" viewBox="0 0 46 36"><path d="M8,10 L23,25 L38,10" fill="none" stroke="#a2a3bd" stroke-width="7" stroke-linecap="round" stroke-linejoin="round"/></svg>
<div class="a" style="left:3520px;top:1932px;width:24px;height:32px;border-radius:12px;background:#3d3e52"></div>
<div class="a t" style="left:1248px;top:1991.13px;font-size:40px;line-height:40px;color:#c8c9d6;font-weight:bold;letter-spacing:0px;font-family:'Liberation Sans', sans-serif;">&gt;</div>
</div></div><div style="position:absolute;left:112px;top:76px;width:3454px;height:1982px;border:1px solid rgba(190,195,230,0.16);border-radius:20px;pointer-events:none"></div></body></html>
